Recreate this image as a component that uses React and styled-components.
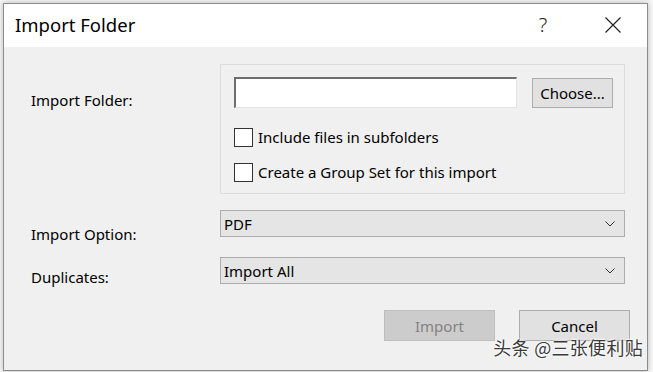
import React from 'react';
import styled, { createGlobalStyle } from 'styled-components';

const GlobalStyle = createGlobalStyle`
  html, body {
    margin: 0;
    padding: 0;
    background: #ffffff;
  }
  body {
    font-family: "Noto Sans", "Open Sans", "Liberation Sans", sans-serif;
    color: #000;
  }
`;

const Screen = styled.div`
  width: 653px;
  height: 372px;
  overflow: hidden;
  background: #f7f7f7;
  display: flex;
  flex-direction: column;
`;

// the document behind the dialog, only its lowest pixels show
const BackStrip = styled.div`
  height: 3px;
  overflow: hidden;
  display: flex;
  align-items: flex-end;
  gap: 56px;
  padding-left: 46px;
  font-family: "Liberation Sans", sans-serif;
  font-weight: 700;
  font-size: 17px;
  line-height: 17px;
  color: #222;
  white-space: nowrap;
`;

const Dialog = styled.div`
  position: relative;
  margin-left: 3px;
  width: 643px;
  height: 366px;
  border: 1px solid #8c8c8c;
  background: #f0f0f0;
  display: flex;
  flex-direction: column;
  box-shadow: 0 0 6px rgba(0, 0, 0, 0.25);
`;

const TitleBar = styled.div`
  height: 43px;
  background: #ffffff;
  display: flex;
  align-items: center;
  padding-left: 11px;
  padding-right: 24px;
`;

const Title = styled.div`
  flex: 1;
  font-size: 18.5px;
  color: #000;
  padding-bottom: 2px;
`;

const TitleButton = styled.div`
  width: ${p => p.$w}px;
  display: flex;
  justify-content: center;
  font-size: 20px;
  font-weight: 300;
  color: #222;
  padding-bottom: 2px;
`;

const TitleGap = styled.div`
  width: 53px;
`;

const Body = styled.div`
  flex: 1;
  position: relative;
  padding: 17px 17px 0 27px;
  display: flex;
  flex-direction: column;
`;

const Row = styled.div`
  display: flex;
  align-items: flex-start;
  height: ${p => p.$h}px;
  margin-top: ${p => p.$gap || 0}px;
`;

const Label = styled.div`
  width: 189px;
  flex: none;
  font-size: 15px;
  line-height: 20px;
  padding-top: ${p => p.$top}px;
  color: #000;
`;

const GroupBox = styled.div`
  width: 405px;
  height: 130px;
  border: 1px solid #dcdcdc;
  box-sizing: border-box;
  padding: 12px 11px 0 13px;
  display: flex;
  flex-direction: column;
`;

const PathLine = styled.div`
  display: flex;
  align-items: flex-start;
  gap: 15px;
`;

const TextBox = styled.div`
  width: 283px;
  height: 31px;
  box-sizing: border-box;
  background: #fff;
  border-top: 2px solid #6e6e6e;
  border-left: 2px solid #6e6e6e;
  border-right: 1px solid #e3e3e3;
  border-bottom: 1px solid #e3e3e3;
`;

const Button = styled.div`
  width: ${p => p.$w}px;
  height: ${p => p.$h}px;
  box-sizing: border-box;
  margin-top: ${p => p.$top || 0}px;
  background: ${p => (p.$disabled ? '#cccccc' : '#e1e1e1')};
  border: 1px solid ${p => (p.$disabled ? '#bfbfbf' : '#adadad')};
  color: ${p => (p.$disabled ? '#838383' : '#000')};
  font-size: 15px;
  display: flex;
  align-items: center;
  justify-content: center;
`;

const CheckRow = styled.div`
  display: flex;
  align-items: center;
  gap: 5px;
  margin-top: ${p => p.$top}px;
  font-size: 15px;
`;

const CheckBox = styled.div`
  width: 19px;
  height: 19px;
  box-sizing: border-box;
  background: #fff;
  border: 1px solid #333;
`;

const Select = styled.div`
  width: 405px;
  height: 27px;
  box-sizing: border-box;
  background: #e5e5e5;
  border: 1px solid #adadad;
  display: flex;
  align-items: center;
  padding: 0 9px 0 3px;
  font-size: 15px;
  color: #000;
`;

const SelectText = styled.span`
  flex: 1;
`;

const Footer = styled.div`
  display: flex;
  justify-content: flex-end;
  gap: 24px;
  margin-top: 26px;
`;

const Watermark = styled.div`
  position: absolute;
  right: 4px;
  bottom: 10px;
  font-family: "Noto Sans CJK SC", sans-serif;
  font-size: 18px;
  color: #3a3a3a;
  letter-spacing: 0.3px;
  text-shadow: 0 0 2px #fff, 0 0 2px #fff, 0 0 3px #fff;
`;

const Chevron = () => (
  <svg width="10" height="6" viewBox="0 0 10 6">
    <polyline points="0.5,0.5 5,5 9.5,0.5" fill="none" stroke="#333" strokeWidth="1" />
  </svg>
);

const CloseIcon = () => (
  <svg width="16" height="16" viewBox="0 0 16 16">
    <path d="M0.5 0.5 L15.5 15.5 M15.5 0.5 L0.5 15.5" stroke="#222" strokeWidth="1.2" />
  </svg>
);

export default function App() {
  return (
    <>
      <GlobalStyle />
      <Screen>
        <BackStrip>
          <span>2019</span>
          <span>Assessment of the Potential of Indole-3-Acetic Aci</span>
        </BackStrip>
        <Dialog>
          <TitleBar>
            <Title>Import Folder</Title>
            <TitleButton $w={14}>?</TitleButton>
            <TitleGap />
            <TitleButton $w={20}><CloseIcon /></TitleButton>
          </TitleBar>
          <Body>
            <Row $h={130}>
              <Label $top={26}>Import Folder:</Label>
              <GroupBox>
                <PathLine>
                  <TextBox />
                  <Button $w={81} $h={30} $top={1}>Choose...</Button>
                </PathLine>
                <CheckRow $top={19}>
                  <CheckBox />
                  <span>Include files in subfolders</span>
                </CheckRow>
                <CheckRow $top={15}>
                  <CheckBox />
                  <span>Create a Group Set for this import</span>
                </CheckRow>
              </GroupBox>
            </Row>
            <Row $h={27} $gap={16}>
              <Label $top={14}>Import Option:</Label>
              <Select>
                <SelectText>PDF</SelectText>
                <Chevron />
              </Select>
            </Row>
            <Row $h={27} $gap={20}>
              <Label $top={10}>Duplicates:</Label>
              <Select>
                <SelectText>Import All</SelectText>
                <Chevron />
              </Select>
            </Row>
            <Footer>
              <Button $w={111} $h={31} $disabled>Import</Button>
              <Button $w={111} $h={31}>Cancel</Button>
            </Footer>
            <Watermark>头条 @三张便利贴</Watermark>
          </Body>
        </Dialog>
      </Screen>
    </>
  );
}
